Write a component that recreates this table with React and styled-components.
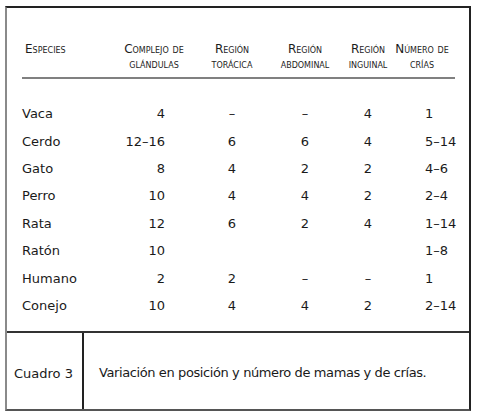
import React from "react";
import styled, { createGlobalStyle } from "styled-components";

const GlobalStyle = createGlobalStyle`
    * {
        box-sizing: border-box;
    }
    body {
        margin: 0;
        background: #ffffff;
        font-family: "DejaVu Sans", "Liberation Sans", sans-serif;
        color: #1a1a1a;
    }
`;

const rows = [
    ["Vaca", "4", "–", "–", "4", "1"],
    ["Cerdo", "12–16", "6", "6", "4", "5–14"],
    ["Gato", "8", "4", "2", "2", "4–6"],
    ["Perro", "10", "4", "4", "2", "2–4"],
    ["Rata", "12", "6", "2", "4", "1–14"],
    ["Ratón", "10", "", "", "", "1–8"],
    ["Humano", "2", "2", "–", "–", "1"],
    ["Conejo", "10", "4", "4", "2", "2–14"],
];

const headers = [
    ["Especies"],
    ["Complejo de", "glándulas"],
    ["Región", "torácica"],
    ["Región", "abdominal"],
    ["Región", "inguinal"],
    ["Número de", "crías"],
];

const App = () => {
    return (
        <>
            <GlobalStyle />
            <Frame>
                <TablePanel>
                    <HeaderRow>
                        {headers.map((lines, i) => (
                            <HeadCell key={i} first={i === 0}>
                                {lines.map((l) => (
                                    <span key={l}>{l}</span>
                                ))}
                            </HeadCell>
                        ))}
                    </HeaderRow>
                    <Body>
                        {rows.map((row) => (
                            <Row key={row[0]}>
                                <Species>{row[0]}</Species>
                                <Glands>{row[1]}</Glands>
                                <Value>{row[2]}</Value>
                                <Value>{row[3]}</Value>
                                <Value>{row[4]}</Value>
                                <Young>{row[5]}</Young>
                            </Row>
                        ))}
                    </Body>
                </TablePanel>
                <Footer>
                    <Label>Cuadro 3</Label>
                    <Caption>Variación en posición y número de mamas y de crías.</Caption>
                </Footer>
            </Frame>
        </>
    );
};

const Frame = styled.div`
    margin: 6px 0 0 5px;
    width: 466px;
    height: 405px;
    border: 2px solid #222;
    border-left-color: #8a8a8a;
    border-bottom-color: #555;
    display: flex;
    flex-direction: column;
`;

const TablePanel = styled.div`
    height: 323px;
    padding: 34px 14px 0 15px;
`;

const columns = `101px 62px 94px 52px 74px 34px`;

const HeaderRow = styled.div`
    display: grid;
    grid-template-columns: ${columns};
    align-items: start;
    padding-bottom: 5px;
    border-bottom: 2px solid #808080;
    width: 433px;
`;

const HeadCell = styled.div`
    display: flex;
    flex-direction: column;
    align-items: ${(p) => (p.first ? "flex-start" : "center")};
    justify-self: ${(p) => (p.first ? "start" : "unsafe center")};
    padding-left: ${(p) => (p.first ? "3px" : "0")};
    font-size: 12px;
    line-height: 15px;
    font-variant: small-caps;
    white-space: nowrap;
    color: #1c1c1c;
`;

const Body = styled.div`
    padding-top: 21px;
`;

const Row = styled.div`
    display: grid;
    grid-template-columns: ${columns};
    height: 27.43px;
    align-items: center;
    font-size: 13px;
    white-space: nowrap;
`;

const Species = styled.div``;

const Glands = styled.div`
    text-align: right;
    padding-right: 20px;
`;

const Value = styled.div`
    text-align: center;
`;

const Young = styled.div`
    padding-left: 20px;
`;

const Footer = styled.div`
    flex: 1;
    display: grid;
    grid-template-columns: 77px 1fr;
    border-top: 2px solid #333;
    font-size: 13px;
`;

const Label = styled.div`
    display: flex;
    align-items: center;
    padding: 4px 0 0 7px;
    border-right: 2px solid #222;
`;

const Caption = styled.div`
    display: flex;
    align-items: center;
    padding: 2px 0 0 15px;
    letter-spacing: -0.4px;
`;

export default App;
